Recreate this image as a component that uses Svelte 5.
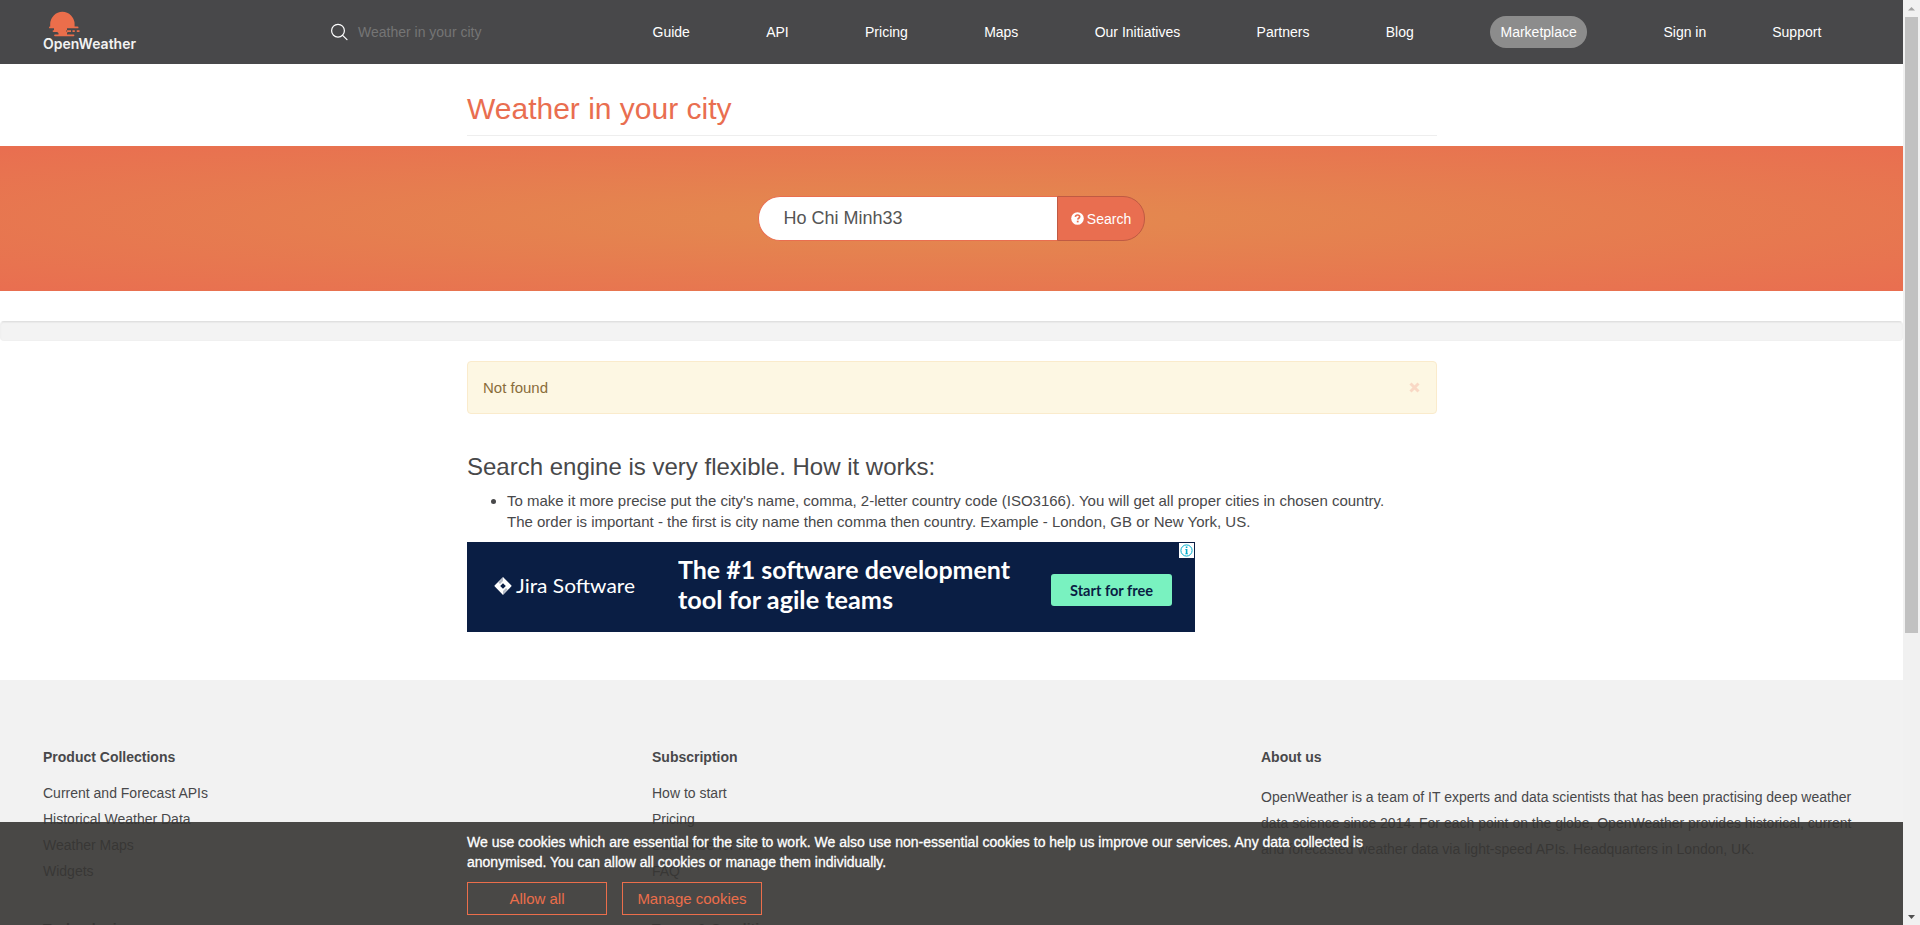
<script>
  const nav = [
    { label: 'Guide', gap: 0 },
    { label: 'API', gap: 76.3 },
    { label: 'Pricing', gap: 76.3 },
    { label: 'Maps', gap: 76.3 },
    { label: 'Our Initiatives', gap: 76.3 },
    { label: 'Partners', gap: 76.3 },
    { label: 'Blog', gap: 76.3 },
    { label: 'Marketplace', gap: 76.3, pill: true },
    { label: 'Sign in', gap: 76.3 },
    { label: 'Support', gap: 66 }
  ];
  const columns = [
    { title: 'Product Collections', links: ['Current and Forecast APIs', 'Historical Weather Data', 'Weather Maps', 'Widgets'], next: 'Technologies' },
    { title: 'Subscription', links: ['How to start', 'Pricing', 'Subscribe for free', 'FAQ'], next: 'Terms & Conditions' }
  ];
</script>

<div class="window">
  <div class="page">
    <header>
      <svg class="logo" width="96" height="42" viewBox="0 0 96 42">
        <g fill="#eb6e4b">
          <path d="M7.200 15.500V13a12.200 12.200 0 0 1 24.400 0v2.500h3a.9.9 0 0 1 0 1.800H6.900a.9.9 0 0 1 0-1.800z" />
          <path d="M11 17h13v2.500H11zM10.500 19.200h12.500V21H10.500a.9.9 0 0 1 0-1.800zM24 19.200h4V21h-4zM29.500 19.200h2.300V21h-2.300zM33.800 19.200h2.700V21h-2.700z" />
          <path d="M13.500 20.500h11.500l-1 1.500v1.500h-8.500V22zM12 23.400h18.500a.9.9 0 0 1 0 1.800H12a.9.9 0 0 1 0-1.800z" />
        </g>
        <text x="0" y="37.800" textLength="93" lengthAdjust="spacingAndGlyphs">OpenWeather</text>
      </svg>
      <div class="finder">
        <svg width="17" height="18" viewBox="0 0 17 18" fill="none" stroke="#fff" stroke-width="1.200" stroke-linecap="round">
          <circle cx="7" cy="7.700" r="6.400" />
          <path d="M11.600 12.300l4.400 4.400" />
        </svg>
        <span>Weather in your city</span>
      </div>
      <nav>
        {#each nav as item}
          <a class:pill={item.pill} style="margin-left: {item.gap}px">{item.label}</a>
        {/each}
      </nav>
    </header>

    <div class="container title"><h1>Weather in your city</h1></div>

    <section class="hero">
      <div class="field">Ho Chi Minh33</div>
      <div class="submit">
        <svg width="13" height="13" viewBox="0 0 13 13">
          <circle cx="6.500" cy="6.500" r="6.300" fill="#fff" />
          <path d="M4.400 4.900C4.500 3.600 5.300 3 6.500 3s2.200.7 2.200 1.800c0 1.400-1.900 1.500-1.900 2.800" fill="none" stroke="#e96e50" stroke-width="1.700" />
          <rect x="5.800" y="8.700" width="1.800" height="1.700" fill="#e96e50" />
        </svg>
        <span>Search</span>
      </div>
    </section>

    <div class="well"></div>

    <main class="container">
      <div class="alert">
        <span>Not found</span>
        <svg width="11" height="11" viewBox="0 0 11 11"><path d="M1.500 1.500l8 8M9.500 1.500l-8 8" stroke="#f9d8c5" stroke-width="3" /></svg>
      </div>
      <h3>Search engine is very flexible. How it works:</h3>
      <ul>
        <li>To make it more precise put the city's name, comma, 2-letter country code (ISO3166). You will get all proper cities in chosen country.<br />The order is important - the first is city name then comma then country. Example - London, GB or New York, US.</li>
      </ul>
      <div class="ad">
        <svg class="jira" width="145" height="24" viewBox="0 0 145 24">
          <path fill="#fff" fill-rule="evenodd" d="M9 2l8.200 8.200a1 1 0 0 1 0 1.400L9 20 .8 11.600a1 1 0 0 1 0-1.400zM9 8.200L6.200 11 9 13.800 11.800 11z" />
          <path d="M9 2v4l-3 3-1.500-1.500zM9 20v-4l3-3 1.500 1.500z" fill="#0a1e44" opacity=".3" />
          <text x="22" y="17.500" textLength="119" lengthAdjust="spacingAndGlyphs">Jira Software</text>
        </svg>
        <svg class="slogan" width="340" height="64" viewBox="0 0 340 64">
          <text x="0" y="24" textLength="332" lengthAdjust="spacingAndGlyphs">The #1 software development</text>
          <text x="0" y="54" textLength="215" lengthAdjust="spacingAndGlyphs">tool for agile teams</text>
        </svg>
        <div class="cta">
          <svg width="84" height="22" viewBox="0 0 84 22"><text x="0" y="16.500" textLength="83" lengthAdjust="spacingAndGlyphs">Start for free</text></svg>
        </div>
        <svg class="info" width="15" height="15" viewBox="0 0 15 15">
          <rect width="15" height="15" fill="#fff" />
          <circle cx="7.500" cy="7.500" r="5.600" fill="none" stroke="#00aecd" stroke-width="1" />
          <path d="M6.800 3.500h1.600v1.500H6.800zM6.200 6h2.200v4.500H9v.8H6.200v-.8h.6V6.800h-.6z" fill="#00aecd" />
        </svg>
      </div>
    </main>

    <footer>
      {#each columns as col}
        <div class="col">
          <h4>{col.title}</h4>
          {#each col.links as link}<a>{link}</a>{/each}
          <h4 class="next">{col.next}</h4>
        </div>
      {/each}
      <div class="col about">
        <h4>About us</h4>
        <p>OpenWeather is a team of IT experts and data scientists that has been practising deep weather<br />data science since 2014. For each point on the globe, OpenWeather provides historical, current<br />and forecasted weather data via light-speed APIs. Headquarters in London, UK.</p>
      </div>
    </footer>

    <div class="cookies">
      <div class="container">
        <p>We use cookies which are essential for the site to work. We also use non-essential cookies to help us improve our services. Any data collected is<br />anonymised. You can allow all cookies or manage them individually.</p>
        <div class="buttons"><button>Allow all</button><button>Manage cookies</button></div>
      </div>
    </div>
  </div>

  <aside class="scroll">
    <svg width="17" height="17"><path d="M5 10.500L8.500 7l3.500 3.500z" fill="#a3a3a3" /></svg>
    <div class="thumb"></div>
    <svg class="down" width="17" height="17"><path d="M5 7l3.500 4L12 7z" fill="#505050" /></svg>
  </aside>
</div>

<style>
  :global(body) { margin: 0; background: #fff; overflow: hidden; }
  * { box-sizing: border-box; }
  .window { display: flex; width: 1920px; height: 925px; overflow: hidden; font: 14px/20px "Liberation Sans", Arial, sans-serif; color: #48484a; }
  .page { position: relative; width: 1903px; height: 925px; overflow: hidden; display: flex; flex-direction: column; }
  .page > * { flex-shrink: 0; }
  header { height: 64px; background: #48484a; display: flex; align-items: center; color: #fff; white-space: nowrap; }
  .logo { margin: 0 0 0 43px; flex: none; }
  .logo text { font: 600 14px Inter, sans-serif; fill: #f2f2f2; }
  .finder { display: flex; align-items: center; gap: 10px; width: 321.500px; margin-left: 192px; color: #757575; }
  nav { display: flex; align-items: center; }
  nav a { line-height: 32px; }
  .pill { background: #8c8c8c; border-radius: 16px; padding: 0 10.400px; }
  .container { width: 970px; margin-left: 467px; }
  .title { height: 82px; padding-top: 28px; }
  h1 { margin: 0; height: 44px; border-bottom: 1px solid #eee; font-size: 30px; line-height: 33px; font-weight: 400; color: #e96e50; }
  .hero { height: 145px; display: flex; justify-content: center; align-items: center; background: radial-gradient(ellipse at center, #e38b4f 0%, #e96e50 100%); }
  .field { width: 299px; height: 45px; background: #fff; border: 1px solid #e96e50; border-right: 0; border-radius: 22px 0 0 22px; padding-left: 24.500px; font-size: 18px; line-height: 42px; color: #555; }
  .submit { width: 88px; height: 45px; border: 1px solid #c05a43; border-radius: 0 22px 22px 0; background: #e96e50; color: #fff; display: flex; align-items: center; justify-content: center; gap: 3px; }
  .well { height: 20px; margin-top: 30px; background: #f3f3f3; border: 1px solid #f0f0f0; border-top-color: #e0e0e0; border-radius: 4px; box-shadow: inset 0 1px 1px rgba(0, 0, 0, .04); }
  .alert { margin-top: 20px; height: 53px; background: #fdf7e3; border: 1px solid #faebcc; border-radius: 4px; padding: 0 16px 0 15px; display: flex; justify-content: space-between; align-items: center; font-size: 15px; color: #8a6d3b; }
  h3 { margin: 40px 0 0; font-size: 24px; line-height: 26px; font-weight: 400; }
  ul { margin: 10px 0; padding-left: 40px; font-size: 15px; line-height: 21px; white-space: nowrap; }
  .ad { position: relative; width: 728px; height: 90px; background: #0a1e44; display: flex; padding-left: 27px; }
  .jira { margin-top: 33px; }
  .slogan { margin: 13px 0 0 39px; }
  .ad text { font-family: Lato, sans-serif; fill: #fff; }
  .jira text { font-size: 20px; }
  .slogan text { font-size: 25px; font-weight: 700; }
  .cta { margin: 31.500px 0 0 33px; width: 121px; height: 32.500px; border-radius: 3px; background: #79f2c0; display: flex; align-items: center; justify-content: center; }
  .cta text { fill: #0a1e44; font-size: 15px; font-weight: 700; }
  .info { position: absolute; top: 1px; right: 1px; }
  footer { margin-top: 48px; height: 500px; background: #f2f2f2; display: flex; padding: 67px 0 0 43px; }
  .col { width: 609px; display: flex; flex-direction: column; white-space: nowrap; }
  h4 { margin: 0 0 13px; font-size: 14px; line-height: 20px; font-weight: 700; }
  .col a { line-height: 26px; }
  h4.next { margin: 35px 0 0; }
  .about p { margin: 4px 0 0; line-height: 26px; }
  .cookies { position: absolute; left: 0; right: 0; bottom: 0; height: 103px; background: rgba(54, 53, 51, .9); padding-top: 10px; color: #fff; }
  .cookies p { margin: 0; line-height: 20px; -webkit-text-stroke: .3px #fff; white-space: nowrap; }
  .buttons { display: flex; gap: 15px; margin-top: 10px; }
  button { width: 140px; height: 33px; padding: 0; border: 1px solid #eb6e4b; background: none; color: #eb6e4b; font: 15px "Liberation Sans", Arial, sans-serif; }
  .scroll { width: 17px; background: #f1f1f1; display: flex; flex-direction: column; }
  .scroll svg { display: block; }
  .thumb { width: 13px; height: 616px; margin-left: 2px; background: #c1c1c1; }
  .down { margin-top: auto; }
</style>
